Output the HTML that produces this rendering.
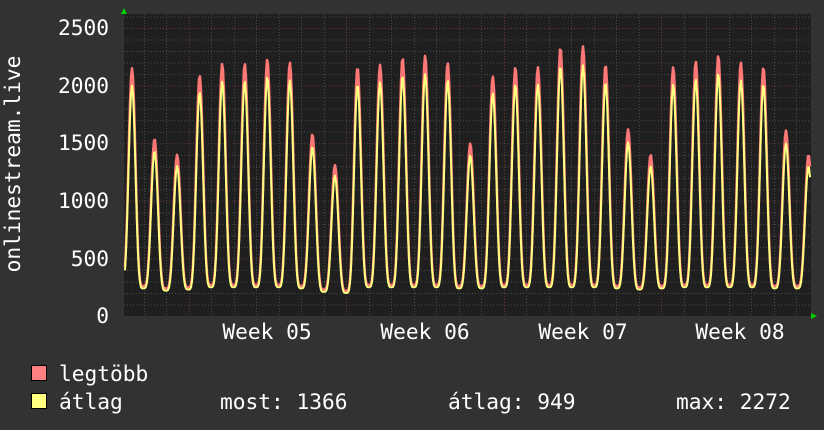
<!DOCTYPE html>
<html><head><meta charset="utf-8"><style>
html,body{margin:0;padding:0;background:#323232;width:824px;height:430px;overflow:hidden}
svg text{font-family:"DejaVu Sans Mono","Liberation Mono",monospace;fill:#fff;font-size:21.2px}
</style></head><body>
<svg id="g" width="824" height="430" xmlns="http://www.w3.org/2000/svg">
<rect x="0" y="0" width="824" height="430" fill="#323232"/>
<rect x="124" y="14" width="687" height="302" fill="#1f1f1f"/>
<g id="grid"></g>
<path id="red" fill="none" stroke="#ff7878" stroke-width="2.5" stroke-linejoin="round"/>
<path id="yel" fill="none" stroke="#ffff80" stroke-width="2" stroke-linejoin="round"/>
<polygon points="121,14 127,14 124,8" fill="#00d000"/>
<polygon points="811,313 811,319 817,316" fill="#00d000"/>
<g text-anchor="end">
<text x="109" y="35">2500</text>
<text x="109" y="93">2000</text>
<text x="109" y="150">1500</text>
<text x="109" y="208">1000</text>
<text x="109" y="266">500</text>
<text x="109" y="323">0</text>
</g>
<text transform="translate(20,164) rotate(-90)" text-anchor="middle">onlinestream.live</text>
<g text-anchor="middle">
<text x="267" y="339">Week 05</text>
<text x="425" y="339">Week 06</text>
<text x="583" y="339">Week 07</text>
<text x="740" y="339">Week 08</text>
</g>
<rect x="31.5" y="365.5" width="15" height="15" fill="#ff8080" stroke="#000"/>
<rect x="31.5" y="393.5" width="15" height="15" fill="#ffff80" stroke="#000"/>
<text x="59" y="381">legtöbb</text>
<text x="59" y="409">átlag</text>
<text x="220" y="409">most: 1366</text>
<text x="448" y="409">átlag: 949</text>
<text x="676" y="409">max: 2272</text>
</svg>
<script>
var NS="http://www.w3.org/2000/svg",grid=document.getElementById("grid");
function ln(x1,y1,x2,y2,c){var l=document.createElementNS(NS,"line");l.setAttribute("x1",x1);l.setAttribute("y1",y1);l.setAttribute("x2",x2);l.setAttribute("y2",y2);l.setAttribute("stroke",c);l.setAttribute("stroke-dasharray","1,2");grid.appendChild(l);}
function Y(v){return 316-v*0.1152;}
for(var v=100;v<=2600;v+=100){var y=Y(v);ln(124,y+0.5,811,y+0.5,v%500==0?"#6a3838":"#4a4a4a");}
for(var x=143.5;x<811;x+=22.5){var maj=Math.abs(((x-188)/157.5)-Math.round((x-188)/157.5))<0.02;ln(Math.round(x)+0.5,14,Math.round(x)+0.5,316,maj?"#6a3838":"#4a4a4a");}
var peaks=[2150,1540,1400,2090,2190,2190,2230,2200,1580,1310,2160,2180,2240,2260,2200,1500,2080,2160,2160,2330,2340,2180,1620,1400,2160,2210,2260,2200,2160,1610,1400];
var mins=[260,240,220,230,250,250,250,250,240,210,200,250,250,250,250,240,240,250,250,250,250,250,240,230,240,250,250,250,250,240,240,240];
function val(x,avg){var t=(x-132)/22.55;var i=Math.round(t);var ph=t-i;
var pi=Math.max(0,Math.min(peaks.length-1,i));var p=peaks[pi];
var mn=mins[Math.max(0,Math.min(mins.length-1,ph<0?pi:pi+1))];
var f=Math.pow((1+Math.cos(2*Math.PI*ph))/2,2.2);
var pk=avg?p*0.93:p;var m=avg?mn:mn+20;
return m+(pk-m)*f;}
function path(avg){var d="";for(var x=125;x<=810;x+=1){var v=val(x,avg);d+=(x==125?"M":"L")+x+","+Y(v).toFixed(1);}return d;}
document.getElementById("red").setAttribute("d",path(false));
document.getElementById("yel").setAttribute("d",path(true));
</script>
</body></html>
